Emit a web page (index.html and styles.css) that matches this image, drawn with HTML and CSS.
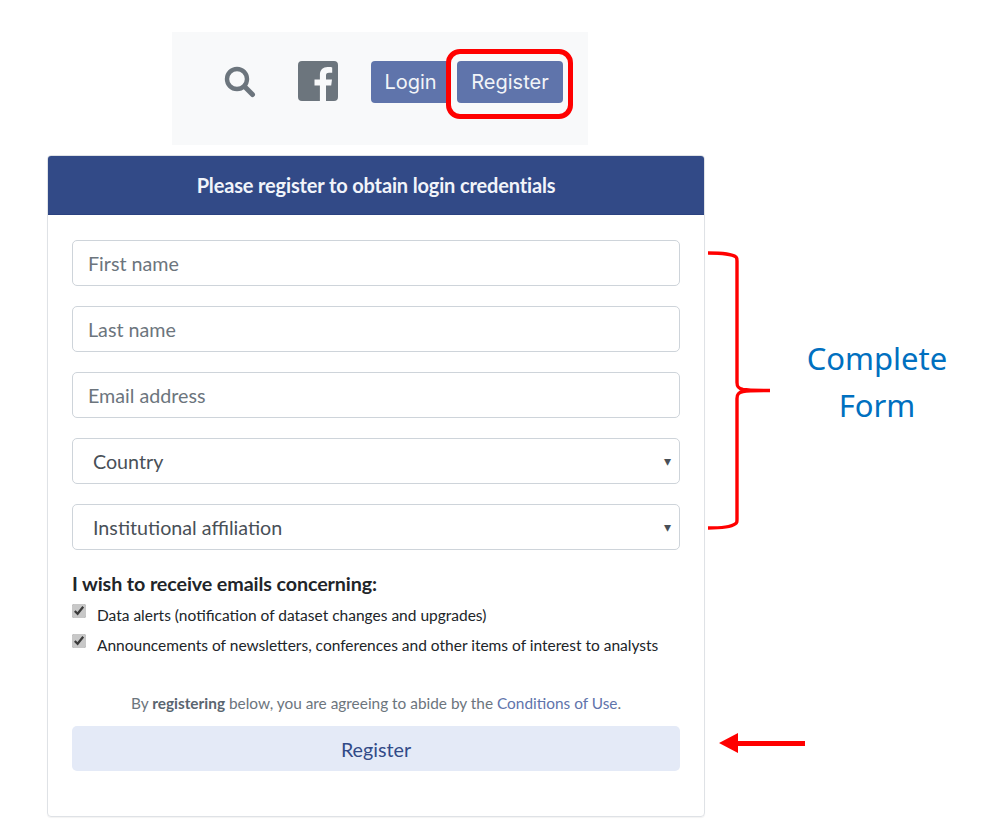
FILE: index.html
```html
<!DOCTYPE html>
<html lang="en">
<head>
<meta charset="utf-8">
<title>Register</title>
<link rel="stylesheet" href="styles.css">
</head>
<body>
<nav class="topbar">
  <svg class="icon-search" width="32" height="32" viewBox="0 0 32 32" aria-hidden="true">
    <circle cx="13" cy="13" r="10" fill="none" stroke="#6c757d" stroke-width="4.4"/>
    <path d="M20.500 20.500l8 8" stroke="#6c757d" stroke-width="5" stroke-linecap="round"/>
  </svg>
  <svg class="icon-fb" width="40" height="40" viewBox="0 0 40 40" aria-hidden="true">
    <path fill="#6c757d" d="M4 0h32a4 4 0 0 1 4 4v32a4 4 0 0 1-4 4h-8V24.500h5.200l.8-6H28v-3.800c0-1.800.5-2.900 3-2.900h3.200V6.400c-.6-.1-2.500-.3-4.600-.3-4.600 0-7.700 2.800-7.700 7.900v4.500H16.500v6h5.400V40H4a4 4 0 0 1-4-4V4a4 4 0 0 1 4-4z"/>
  </svg>
  <a class="nav-btn nav-login">Login</a>
  <a class="nav-btn nav-register">Register</a>
</nav>

<main class="card">
  <header class="card-head">Please register to obtain login credentials</header>
  <form class="card-body">
    <div class="fields">
      <input class="field" type="text" placeholder="First name">
      <input class="field" type="text" placeholder="Last name">
      <input class="field" type="text" placeholder="Email address">
      <div class="field select"><span>Country</span><i class="caret">▾</i></div>
      <div class="field select"><span>Institutional affiliation</span><i class="caret">▾</i></div>
    </div>
    <h2 class="emails-title">I wish to receive emails concerning:</h2>
    <label class="check check-first"><input type="checkbox" checked><span>Data alerts (notification of dataset changes and upgrades)</span></label>
    <label class="check"><input type="checkbox" checked><span>Announcements of newsletters, conferences and other items of interest to analysts</span></label>
    <p class="terms">By <b>registering</b> below, you are agreeing to abide by the <a class="terms-link">Conditions of Use</a>.</p>
    <div class="submit">Register</div>
  </form>
</main>

<div class="highlight"></div>
<svg class="brace" width="64" height="280" viewBox="0 0 64 280" aria-hidden="true">
  <path d="M1 3c14 0 24 1 28 4 1 1 1 2 1 4v121.500c0 4 1 6 6 7 6 1 18 1 27 1-9 0-21 0-27 1-5 1-6 3-6 7v120.500c0 3 0 4-2 5-4 3-13 4-27 4" fill="none" stroke="#ff0000" stroke-width="3.400"/>
</svg>
<div class="callout">Complete<br>Form</div>
<svg class="arrow" width="88" height="20" viewBox="0 0 88 20" aria-hidden="true">
  <path fill="#ff0000" d="M0 10L19 0v8h67v5H19v7z"/>
</svg>
</body>
</html>
```
FILE: styles.css
```css
* { box-sizing: border-box; }
html, body { margin: 0; padding: 0; }
body {
  position: relative;
  width: 1007px;
  height: 830px;
  overflow: hidden;
  background: #fff;
  padding-top: 32px;
  font-family: "Lato", "Liberation Sans", sans-serif;
  color: #212529;
}
.topbar {
  display: flex;
  align-items: flex-start;
  width: 416px;
  height: 113px;
  margin-left: 172px;
  padding-top: 29px;
  background: #f8f9fa;
}
.icon-search { margin: 5px 0 0 52px; }
.icon-fb { margin-left: 42px; }
.nav-btn {
  display: flex;
  align-items: center;
  justify-content: center;
  height: 42px;
  border-radius: 4px;
  background: #5f74ab;
  color: #f2f4f8;
  font-family: "Inter", sans-serif;
  font-size: 20px;
}
.nav-login { width: 79px; margin-left: 33px; }
.nav-register { width: 106px; margin-left: 7px; }
.card {
  width: 658px;
  height: 662px;
  margin: 10px 0 0 47px;
  border: 1px solid #dfe2e6;
  border-radius: 4px;
  box-shadow: 0 1px 1px rgba(0,0,0,.05);
}
.card-head {
  height: 59px;
  border-radius: 3px 3px 0 0;
  background: #324a87;
  border-bottom: 1px solid #2b4280;
  color: #f1f4fa;
  font-size: 20px;
  font-weight: 700;
  letter-spacing: -.15px;
  line-height: 59px;
  text-align: center;
}
.card-body { padding: 25px 24px 0; }
.fields { display: flex; flex-direction: column; gap: 20px; }
.field {
  display: block;
  width: 608px;
  height: 46px;
  padding: 0 15px;
  border: 1px solid #ced4da;
  border-radius: 5px;
  background: #fff;
  font-family: inherit;
  font-size: 19.7px;
  color: #495057;
  outline: 0;
}
.field::placeholder { color: #6c757d; opacity: 1; }
.select {
  display: flex;
  align-items: center;
  justify-content: space-between;
  padding: 0 8px 0 20px;
}
.caret {
  font-style: normal;
  font-family: "DejaVu Sans", sans-serif;
  font-size: 14px;
  color: #495057;
}
.emails-title {
  margin: 22px 0 8px;
  font-size: 19.7px;
  line-height: 24px;
  font-weight: 700;
  letter-spacing: -.1px;
  color: #212529;
}
.check {
  display: flex;
  align-items: flex-start;
  gap: 11px;
  height: 29px;
  font-size: 15.5px;
  line-height: 22px;
}
.check-first { height: 30px; }
.check input {
  width: 14px;
  height: 14px;
  margin: 0;
  accent-color: #c8c8c8;
  flex: none;
}
.check span { white-space: nowrap; }
.terms {
  margin: 28px 0 11px;
  font-size: 15.4px;
  line-height: 24px;
  text-align: center;
  color: #6c757d;
}
.terms b { color: #5a6570; }
.terms-link { color: #5f74ab; }
.submit {
  height: 45px;
  border-radius: 5px;
  background: #e4eaf7;
  color: #324a87;
  font-size: 19.7px;
  line-height: 47px;
  text-align: center;
}
.highlight {
  position: absolute;
  left: 446px;
  top: 49px;
  width: 127px;
  height: 70px;
  border: 5px solid #ff0000;
  border-radius: 14px;
}
.brace { position: absolute; left: 707px; top: 250px; }
.callout {
  position: absolute;
  left: 787px;
  top: 335px;
  width: 180px;
  text-align: center;
  font-family: "Noto Sans", "Open Sans", sans-serif;
  font-size: 31px;
  line-height: 47px;
  color: #0070c0;
}
.arrow { position: absolute; left: 719px; top: 733px; }
```
